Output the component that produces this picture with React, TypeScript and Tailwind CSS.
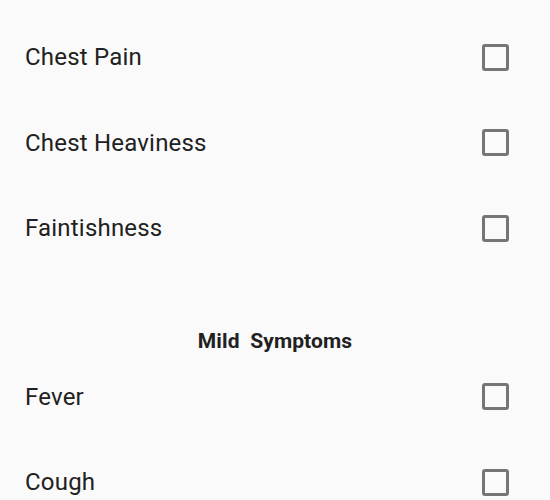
const severe = ['Chest Pain', 'Chest Heaviness', 'Faintishness'];
const mild = ['Fever', 'Cough'];

function SymptomRow({ label }: { label: string }) {
  return (
    <div className="flex h-[85.5px] items-center justify-between pl-[25px] pr-[41px]">
      <span className="text-[24px] tracking-[0.2px] text-[#212121]">{label}</span>
      <span className="block h-[27px] w-[27px] rounded-[3px] border-[3px] border-[#757575]" />
    </div>
  );
}

export default function App() {
  return (
    <div className="h-[500px] w-[550px] overflow-hidden bg-[#fafafa] pt-[14.5px] font-['Roboto',sans-serif]">
      {severe.map((s) => (
        <SymptomRow key={s} label={s} />
      ))}
      <h2 className="mt-[59px] flex h-[24px] items-center justify-center whitespace-pre text-[21px] font-bold tracking-[0.1px] text-[#212121]">
        Mild  Symptoms
      </h2>
      {mild.map((s) => (
        <SymptomRow key={s} label={s} />
      ))}
    </div>
  );
}
